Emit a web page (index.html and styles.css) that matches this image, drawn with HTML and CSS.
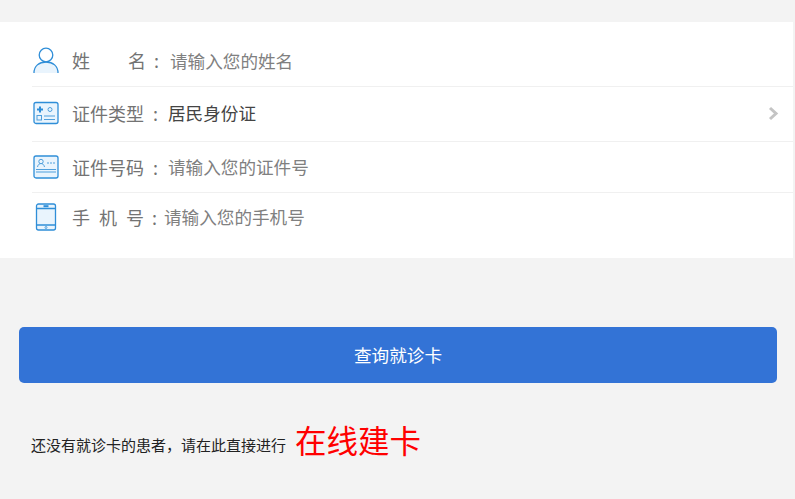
FILE: index.html
```html
<!DOCTYPE html>
<html lang="zh-CN">
<head>
  <meta charset="UTF-8"/>
  <title>查询就诊卡</title>
  <link rel="stylesheet" href="styles.css">
</head>
<body>
  <form class="panel">
    <div class="row row-name">
      <svg class="icon" width="28" height="28" viewBox="0 0 28 28">
        <path class="fill" d="M2 27c0-7 5-11 12-11s12 4 12 11z"/>
        <circle class="line" cx="14" cy="9" r="6.800"/>
        <path class="line" d="M2 27c0-7 5-11 12-11s12 4 12 11"/>
      </svg>
      <label class="label"><span>姓</span><span>名</span></label>
      <span class="colon">:</span>
      <span class="hint">请输入您的姓名</span>
    </div>
    <div class="row row-type">
      <svg class="icon" width="28" height="28" viewBox="0 0 28 28">
        <rect class="fill line" x="2" y="3.500" width="24" height="21" rx="2"/>
        <path class="bold" d="M8 7.500v6M5 10.500h6"/>
        <circle class="thin" cx="18" cy="10.500" r="2"/>
        <rect class="thin" x="5" y="16.500" width="4.500" height="4.500"/>
        <path class="thin" d="M12 17h11M12 20.500h11"/>
      </svg>
      <label class="label label-wide">证件类型</label>
      <span class="colon">:</span>
      <span class="value">居民身份证</span>
      <svg class="arrow" width="11" height="15" viewBox="0 0 11 15"><path d="M2 2l6 5.500-6 5.500"/></svg>
    </div>
    <div class="row row-number">
      <svg class="icon" width="28" height="28" viewBox="0 0 28 28">
        <rect class="fill line" x="2" y="3" width="24" height="22" rx="2"/>
        <circle class="thin" cx="9" cy="8.500" r="2.200"/>
        <path class="thin" d="M5.500 14c.5-2.500 2-3.500 3.500-3.500s3 1 3.500 3.500M15 10h2M18 10h2M21 10h2"/>
        <path class="thin" d="M4 16.500h20M4 19h20"/>
      </svg>
      <label class="label label-wide">证件号码</label>
      <span class="colon">:</span>
      <span class="hint">请输入您的证件号</span>
    </div>
    <div class="row row-phone">
      <svg class="icon" width="28" height="28" viewBox="0 0 28 28">
        <rect class="fill line" x="4.500" y="1" width="19" height="26" rx="2"/>
        <path class="line" d="M4.500 5.500h19M4.500 22h19"/>
        <path class="bold" d="M11.500 3.200h5"/>
        <circle class="thin" cx="14" cy="24.500" r="1"/>
      </svg>
      <label class="label label-spaced"><span>手</span><span>机</span><span>号</span></label>
      <span class="colon">:</span>
      <span class="hint">请输入您的手机号</span>
    </div>
  </form>

  <button class="submit" type="button">查询就诊卡</button>

  <p class="note">
    <span class="note-text">还没有就诊卡的患者，请在此直接进行</span>
    <a class="link">在线建卡</a>
  </p>
</body>
</html>
```

FILE: styles.css
```css
body {
  margin: 0;
  height: 499px;
  overflow: hidden;
  padding-top: 22px;
  box-sizing: border-box;
  background: #f3f3f3;
  font-family: "Noto Sans CJK SC", "Noto Sans", sans-serif;
}

/* Form panel */
.panel {
  display: flex;
  flex-direction: column;
  width: 793px;
  height: 236px;
  padding-left: 32px;
  box-sizing: border-box;
  background: #fff;
}
.row {
  display: flex;
  align-items: center;
  border-bottom: 1px solid #f0f0f0;
  font-size: 17.6px;
  color: #808080;
}
.row-name { height: 52px; padding-top: 12px; }
.row-type { height: 52px; padding-bottom: 2px; }
.row-number { height: 49px; padding-bottom: 1px; }
.row-phone { height: 65px; padding-bottom: 18px; box-sizing: border-box; border-bottom: 0; }

.icon { flex: none; margin-right: 12px; }
.fill { fill: #e9f4fd; }
.line { fill: none; stroke: #2f8ed8; stroke-width: 1.3; }
.fill.line { fill: #e9f4fd; }
.thin { fill: none; stroke: #4f9fdc; stroke-width: 1; }
.bold { fill: none; stroke: #2f8ed8; stroke-width: 2; }

.label { font-size: 18px; color: #737373; }
.row-name .label { display: flex; justify-content: space-between; width: 74px; }
.label-wide { width: 72px; }
.label-spaced { display: flex; justify-content: space-between; width: 72px; }
.colon { margin: 0 10px 0 9px; font-size: 18px; color: #737373; }
.row-name .colon { margin: 0 11px 0 8px; }
.row-phone .colon { margin: 0 7px 0 8px; }
.value { margin-bottom: 2px; color: #444; }
.hint { color: #808080; }
.arrow { margin-left: auto; margin-right: 14px; }
.arrow path { fill: none; stroke: #c4c4c4; stroke-width: 3; }

/* Button */
.submit {
  display: block;
  width: 758px;
  height: 56px;
  margin: 69px 0 0 19px;
  padding-bottom: 3px;
  border: 0;
  border-radius: 5px;
  background: #3373d6;
  color: #fff;
  font-family: inherit;
  font-size: 17.6px;
}

.note {
  display: flex;
  align-items: center;
  margin: 32px 0 0 31px;
  font-size: 15px;
  color: #222;
}
.note-text { margin-top: 10px; }
.link {
  margin-left: 9px;
  font-size: 31.500px;
  line-height: 48px;
  color: #f00;
}
```
